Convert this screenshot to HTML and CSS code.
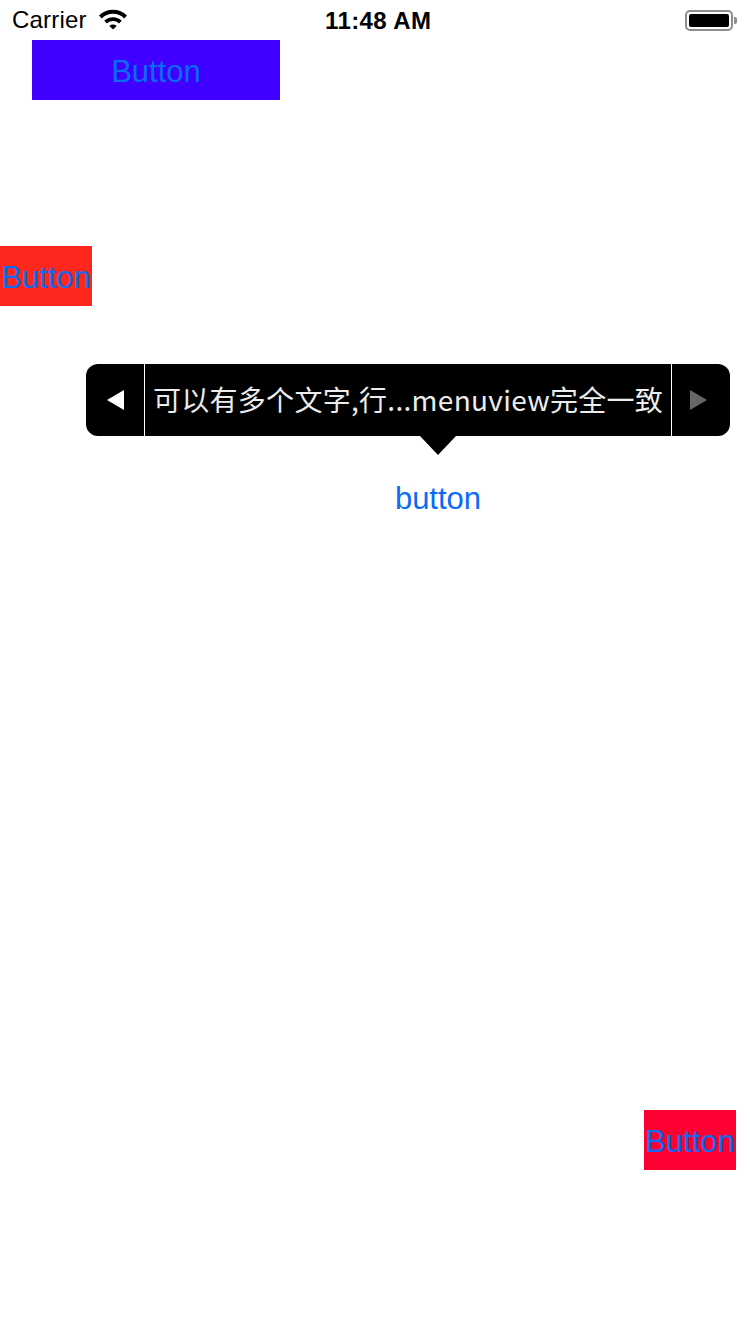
FILE: index.html
```html
<!DOCTYPE html>
<html>
<head>
<meta charset="utf-8">
<link rel="stylesheet" href="styles.css">
</head>
<body>
<div class="screen">
  <div class="status">
    <div class="status-left">
      <span class="carrier">Carrier</span>
      <svg class="wifi" width="30" height="22" viewBox="0 0 30 22">
        <path d="M1 7.5 A20 20 0 0 1 29 7.5 L26.2 10.4 A16 16 0 0 0 3.8 10.4 Z" fill="#000"/>
        <path d="M6.2 12.8 A12.5 12.5 0 0 1 23.8 12.8 L21 15.6 A8.5 8.5 0 0 0 9 15.6 Z" fill="#000"/>
        <path d="M11.3 17.9 A5.4 5.4 0 0 1 18.7 17.9 L15 21.6 Z" fill="#000"/>
      </svg>
    </div>
    <div class="time">11:48 AM</div>
    <div class="status-right">
      <div class="battery"><div class="battery-fill"></div></div>
      <div class="battery-nub"></div>
    </div>
  </div>

  <div class="btn btn-blue">Button</div>
  <div class="btn btn-red">Button</div>

  <div class="menu">
    <div class="menu-arrow menu-left"><span class="tri tri-left"></span></div>
    <div class="menu-sep"></div>
    <div class="menu-text">可以有多个文字,行...menuview完全一致</div>
    <div class="menu-sep"></div>
    <div class="menu-arrow menu-right"><span class="tri tri-right"></span></div>
  </div>

  <div class="btn btn-plain">button</div>

  <div class="btn btn-red2">Button</div>
</div>
</body>
</html>
```

FILE: styles.css
```css
html, body {
  margin: 0;
  padding: 0;
  background: #fff;
}
.screen {
  width: 750px;
  height: 1334px;
  display: flex;
  flex-direction: column;
  align-items: flex-start;
  font-family: "Liberation Sans", "Noto Sans CJK SC", sans-serif;
}
.status {
  width: 750px;
  height: 40px;
  display: flex;
  align-items: center;
  justify-content: space-between;
  box-sizing: border-box;
  padding: 0 12px 0 12px;
  color: #000;
  position: relative;
}
.status-left {
  display: flex;
  align-items: center;
  gap: 11px;
  width: 160px;
}
.carrier {
  font-size: 24px;
  letter-spacing: 0.2px;
}
.wifi {
  margin-top: -2px;
}
.time {
  font-size: 24px;
  font-weight: bold;
  letter-spacing: 0.4px;
  position: absolute;
  left: 325px;
  top: 7px;
}
.status-right {
  display: flex;
  align-items: center;
  width: 160px;
  justify-content: flex-end;
  padding-right: 1px;
}
.battery {
  width: 48px;
  height: 21px;
  border: 2px solid #8e8e8e;
  border-radius: 5px;
  box-sizing: border-box;
  padding: 2px;
  display: flex;
}
.battery-fill {
  flex: 1;
  background: #000;
  border-radius: 2px;
}
.battery-nub {
  width: 3px;
  height: 7px;
  background: #8e8e8e;
  border-radius: 0 2px 2px 0;
  margin-left: 1px;
}
.btn {
  height: 60px;
  box-sizing: border-box;
  padding-top: 3px;
  display: flex;
  align-items: center;
  justify-content: center;
  font-size: 31px;
  color: #0a6cf5;
  font-family: "Liberation Sans", sans-serif;
}
.btn-blue {
  margin-left: 32px;
  width: 248px;
  background: #4000ff;
}
.btn-red {
  margin-top: 146px;
  width: 92px;
  background: #ff261e;
}
.menu {
  margin-top: 58px;
  margin-left: 86px;
  width: 644px;
  height: 72px;
  background: #000;
  border-radius: 12px;
  display: flex;
  align-items: stretch;
  position: relative;
}
.menu::after {
  content: "";
  position: absolute;
  left: 334px;
  top: 72px;
  border-left: 18px solid transparent;
  border-right: 18px solid transparent;
  border-top: 19px solid #000;
}
.menu-arrow {
  width: 58px;
  display: flex;
  align-items: center;
  justify-content: center;
}
.menu-sep {
  width: 1px;
  background: #fff;
}
.menu-text {
  flex: 1;
  display: flex;
  align-items: center;
  justify-content: center;
  color: #ececec;
  font-size: 28px;
  letter-spacing: 0.3px;
  white-space: nowrap;
  padding-bottom: 2px;
  font-family: "Noto Sans CJK SC", sans-serif;
}
.tri {
  width: 0;
  height: 0;
  border-top: 10px solid transparent;
  border-bottom: 10px solid transparent;
}
.tri-left {
  border-right: 17px solid #fff;
  margin-left: 0px;
}
.tri-right {
  border-left: 17px solid #666;
  margin-right: 6px;
}
.btn-plain {
  margin-top: 31px;
  margin-left: 394px;
  width: 88px;
  color: #0a6cf5;
}
.btn-red2 {
  margin-top: 583px;
  margin-left: 644px;
  width: 92px;
  background: #ff0033;
}
```
